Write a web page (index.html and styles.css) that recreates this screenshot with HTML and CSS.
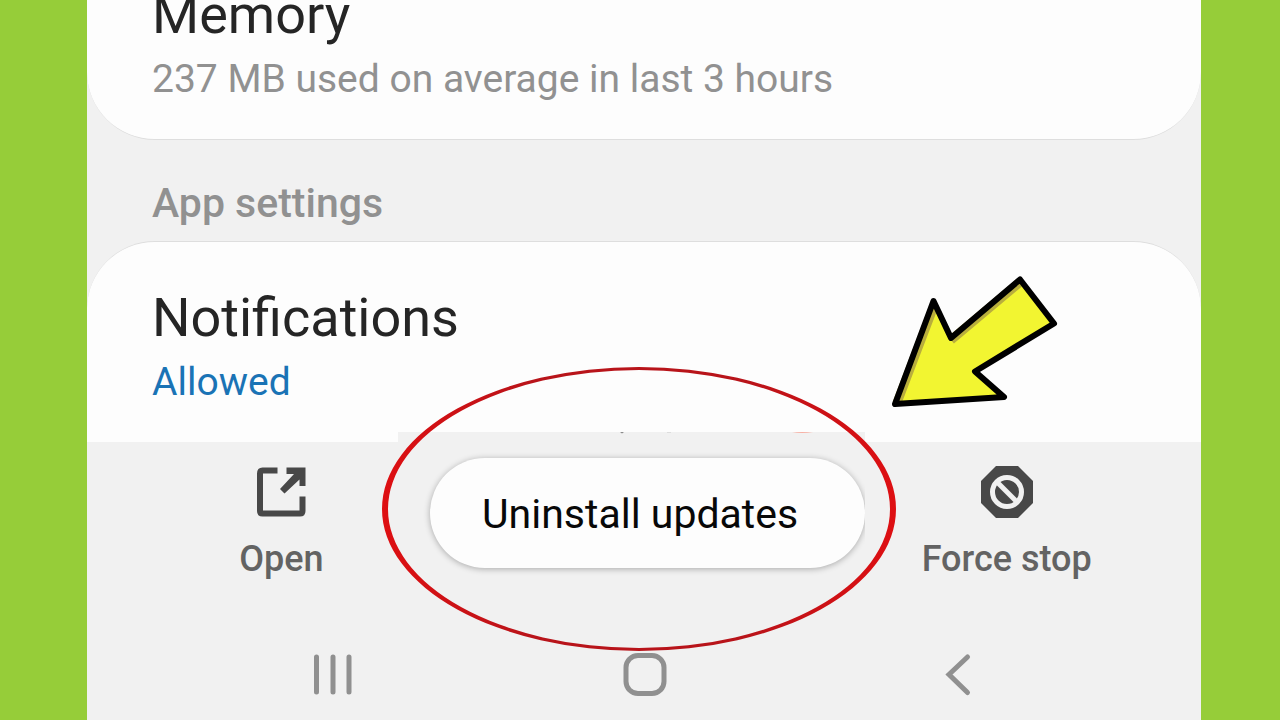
FILE: index.html
```html
<!DOCTYPE html>
<html lang="en">
<head>
<meta charset="utf-8">
<title>App info</title>
<link rel="stylesheet" href="styles.css">
</head>
<body>
<div class="phone">
  <main class="content">
    <section class="card card-end">
      <h2 class="title">Memory</h2>
      <p class="detail">237 MB used on average in last 3 hours</p>
    </section>
    <h3 class="heading">App settings</h3>
    <section class="card card-start">
      <h2 class="title">Notifications</h2>
      <p class="detail allowed">Allowed</p>
    </section>
  </main>

  <footer class="footer">
    <div class="actions">
      <button class="action action-open" type="button">
        <svg class="action-icon" width="54" height="54" viewBox="0 0 54 54" aria-hidden="true">
          <path d="M23.500 5.500H8.500Q6 5.500 6 8.500V46Q6 48.500 8.500 48.500H46Q48.500 48.500 48.500 46V31.500" fill="none" stroke="#484848" stroke-width="6"/>
          <path d="M32.500 2.500H51.500V21H45.500V14.500L30.500 28.500L26 24L40 9H32.500Z" fill="#484848"/>
        </svg>
        <span>Open</span>
      </button>
      <button class="action action-stop" type="button">
        <svg class="action-icon" width="54" height="54" viewBox="0 0 54 54" aria-hidden="true">
          <path d="M16 1H38L53 16V38L38 53H16L1 38V16Z" fill="#484848"/>
          <circle cx="27" cy="27" r="14.500" fill="none" stroke="#f1f1f1" stroke-width="5"/>
          <path d="M17 17L37 37" stroke="#f1f1f1" stroke-width="5"/>
        </svg>
        <span>Force stop</span>
      </button>
    </div>
    <nav class="nav" aria-label="System navigation">
      <button class="nav-button" type="button" aria-label="Recent apps">
        <svg width="44" height="44" viewBox="0 0 44 44"><path d="M5.500 4V39M22 4V39M38 4V39" fill="none" stroke="#909090" stroke-width="5" stroke-linecap="round"/></svg>
      </button>
      <button class="nav-button" type="button" aria-label="Home">
        <svg width="44" height="44" viewBox="0 0 44 44"><rect x="3" y="2.500" width="38" height="38" rx="12" fill="none" stroke="#909090" stroke-width="5"/></svg>
      </button>
      <button class="nav-button" type="button" aria-label="Back">
        <svg width="44" height="44" viewBox="0 0 44 44"><path d="M32.500 4L14 21.500L32.500 39.500" fill="none" stroke="#909090" stroke-width="5" stroke-linecap="round"/></svg>
      </button>
    </nav>
    <div class="popup">
      <svg class="specks" width="240" height="3" viewBox="0 0 240 3" aria-hidden="true">
        <path d="M22 0H26L24 1.500Z" fill="#888"/>
        <path d="M69 0H73V1H69Z" fill="#ddd"/>
        <path d="M194 1Q204 -1 215 1Z" fill="#f7b0a4"/>
      </svg>
      <button class="uninstall" type="button">Uninstall updates</button>
    </div>
  </footer>

  <svg class="ring" width="516" height="286" viewBox="0 0 516 286" aria-hidden="true">
    <defs>
      <linearGradient id="ring-fill">
        <stop offset="0" stop-color="#de0f12"/>
        <stop offset="0.300" stop-color="#b8141a"/>
        <stop offset="0.700" stop-color="#b8141a"/>
        <stop offset="1" stop-color="#de0f12"/>
      </linearGradient>
    </defs>
    <path fill="url(#ring-fill)" fill-rule="evenodd" d="M1 143A257 142 0 0 1 515 143A257 142 0 0 1 1 143ZM7 143A251 139 0 0 0 509 143A251 139 0 0 0 7 143Z"/>
  </svg>
  <svg class="arrow" width="170" height="136" viewBox="0 0 170 136" aria-hidden="true">
    <path d="M130 7.500L164 51.500L85 99.500L114 125L5 132L43.500 29L61 66Z" fill="#f2f531"/>
    <path d="M7 131L44 34M61 68L129 11" fill="none" stroke="#b9ae3d" stroke-width="9"/>
    <path d="M130 7.500L164 51.500L85 99.500L114 125L5 132L43.500 29L61 66Z" fill="none" stroke="#000" stroke-width="6" stroke-linejoin="round"/>
  </svg>
</div>
</body>
</html>
```
FILE: styles.css
```css
* {
  box-sizing: border-box;
}

body {
  margin: 0;
  padding: 0 79px 0 87px;
  background: #96cd39;
  font-family: Roboto, "Liberation Sans", sans-serif;
}

.phone {
  position: relative;
  display: flex;
  flex-direction: column;
  height: 100vh;
  overflow: hidden;
  background: #f1f1f1;
}

/* The list is scrolled to its end, so the first card runs off the top. */
.content {
  display: flex;
  flex: 1;
  flex-direction: column;
  justify-content: flex-end;
  min-height: 0;
}

.card {
  display: flex;
  flex-direction: column;
  flex-shrink: 0;
  gap: 8px;
  padding: 44px 65px 36px;
  border: 1px solid #dedede;
  border-width: 1px 0;
  background: #fdfdfd;
}

.card-end {
  border-radius: 0 0 68px 68px;
}

.card-start {
  border-bottom: 0;
  border-radius: 68px 68px 0 0;
}

.title,
.detail,
.heading {
  margin: 0;
}

.title {
  color: #252525;
  font-size: 54px;
  font-weight: 400;
  line-height: 64px;
}

.detail {
  color: #919191;
  font-size: 39px;
  line-height: 48px;
}

.allowed {
  color: #1a73b5;
}

.heading {
  padding: 39px 65px 14px;
  color: #919191;
  font-size: 41px;
  font-weight: 500;
  line-height: 48px;
}

.footer {
  position: relative;
  flex-shrink: 0;
}

button {
  border: 0;
  background: none;
  font-family: inherit;
}

.actions {
  display: grid;
  grid-template-columns: repeat(3, 1fr);
  padding: 23px 13px 0;
}

.action {
  display: flex;
  flex-direction: column;
  align-items: center;
  gap: 19px;
  padding: 0;
  color: #636363;
  font-size: 36px;
  font-weight: 500;
  line-height: 42px;
}

.action-icon {
  display: block;
}

.action-stop {
  grid-column: 3;
}

.nav {
  display: grid;
  grid-template-columns: repeat(3, 1fr);
  padding: 73px 88px 23px 90px;
}

.nav-button {
  display: flex;
  justify-content: center;
  padding: 0;
}

.popup {
  position: absolute;
  top: -10px;
  left: 311px;
  padding: 26px 0 20px 32px;
  overflow: hidden;
  background: #f1f1f1;
}

.specks {
  position: absolute;
  top: 0;
  left: 200px;
}

.uninstall {
  display: block;
  padding: 32px 67px 30px 52px;
  border-radius: 55px;
  background: #fdfdfd;
  box-shadow: 0 1px 6px rgba(0, 0, 0, 0.3);
  color: #080808;
  font-size: 41px;
  line-height: 48px;
}

.ring {
  position: absolute;
  top: 366px;
  left: 294px;
}

.arrow {
  position: absolute;
  top: 272px;
  left: 803px;
}
```
